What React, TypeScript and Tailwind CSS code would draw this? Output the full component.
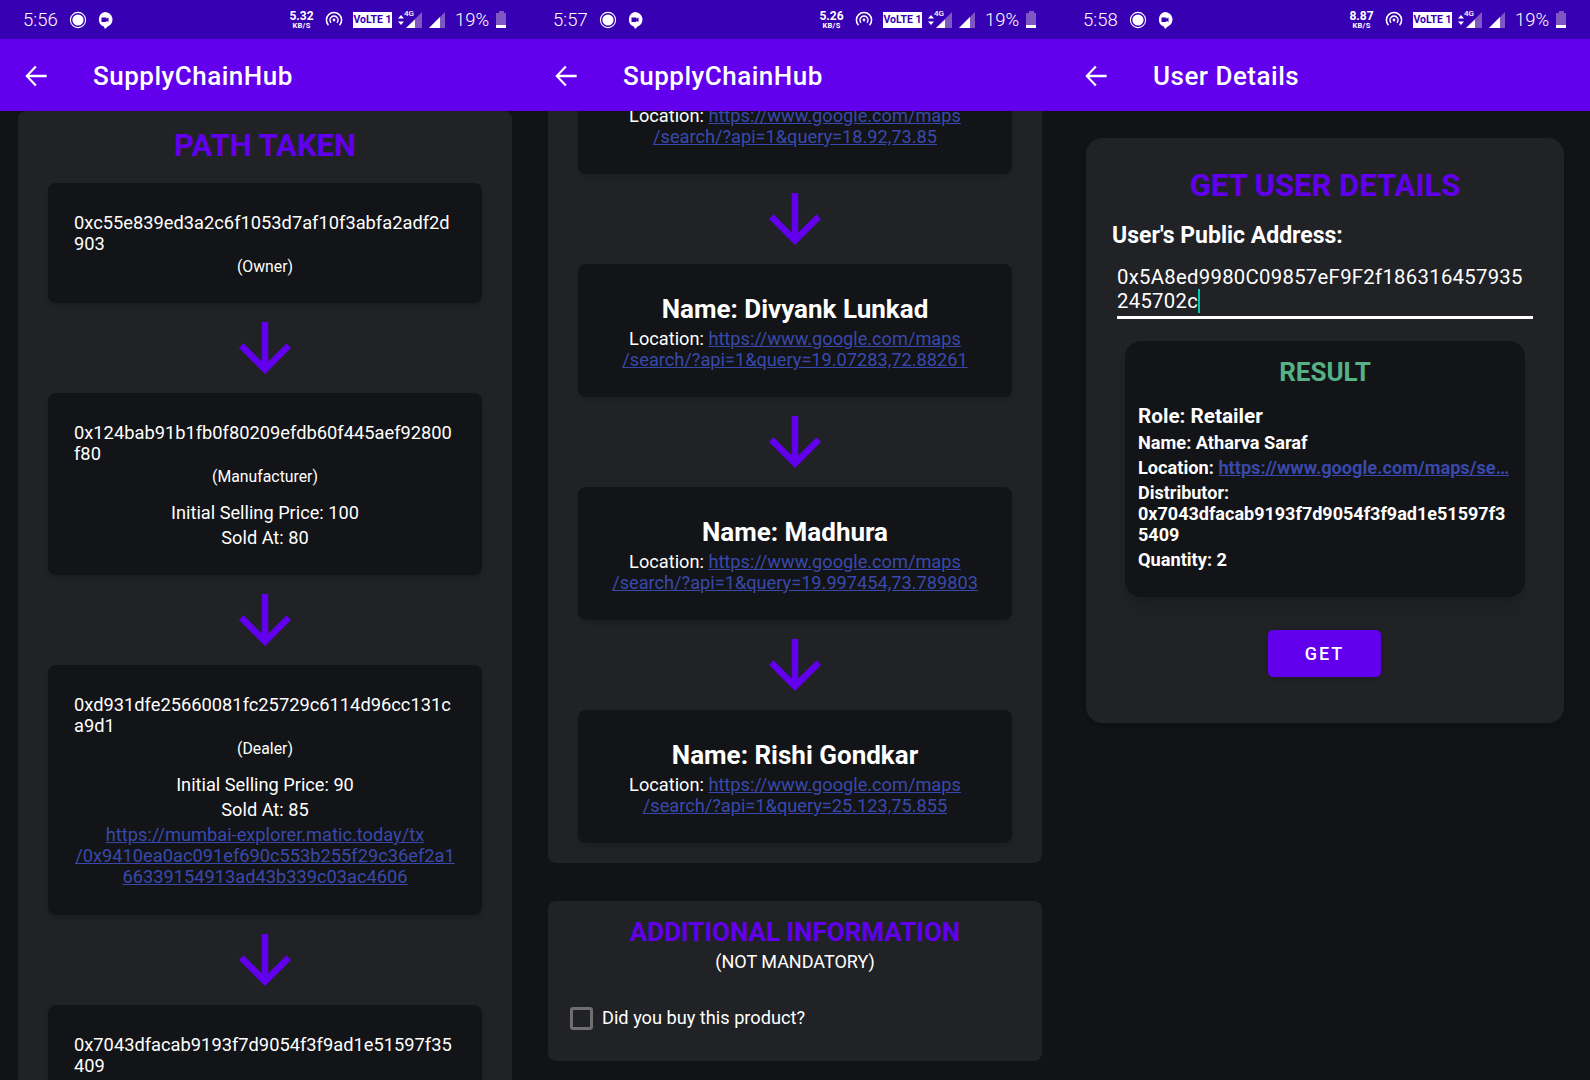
import type { ReactNode } from "react";

function StatusBar({ time, speed }: { time: string; speed: string }) {
  return (
    <div className="h-[39px] shrink-0 bg-[#3700b3] flex items-center text-white relative">
      <span className="ml-[23px] mt-[2px] w-[45px] text-[18.500px] font-light leading-none">{time}</span>
      <svg width="18" height="18" viewBox="0 0 18 18" className="ml-[1px]">
        <circle cx="9" cy="9" r="7.6" fill="none" stroke="white" strokeWidth="1.1" />
        <circle cx="9" cy="9" r="5.6" fill="white" />
      </svg>
      <svg width="16" height="18" viewBox="0 0 16 18" className="ml-[10px]">
        <path d="M8 1a7.500 7.500 0 0 1 2.700 14.500L8 18l-1.200-2.600A7.500 7.500 0 0 1 8 1z" fill="white" />
        <path d="M4.500 6.500h4.800v1.300l2.200-1.300v4.600l-2.200-1.300v1.300H4.500z" fill="#3700b3" />
      </svg>
      <div className="ml-[176px] w-[25px] flex flex-col items-center font-bold">
        <span className="text-[12px] leading-[12px]">{speed}</span>
        <span className="text-[7.5px] leading-[8px] tracking-[0.3px]">KB/S</span>
      </div>
      <svg width="18" height="18" viewBox="0 0 18 18" className="ml-[11px]">
        <path d="M3.400 14.200a7.600 7.600 0 1 1 11.200 0" fill="none" stroke="white" strokeWidth="1.5" />
        <path d="M6 11.700a4 4 0 1 1 6 0" fill="none" stroke="white" strokeWidth="1.5" />
        <circle cx="9" cy="9" r="1.4" fill="white" />
      </svg>
      <div className="ml-[10px] w-[39px] h-[16px] bg-white text-[#3700b3] text-[10.500px] font-bold leading-[16px] text-center whitespace-nowrap">
        VoLTE 1
      </div>
      <svg width="8" height="12" viewBox="0 0 8 12" className="ml-[5px]">
        <path d="M4 1l3 3.600H1zM4 11L1 7.400h6z" fill="white" />
      </svg>
      <div className="relative ml-[0px] w-[18px] h-[18px]">
        <svg width="18" height="18" viewBox="0 0 18 18">
          <path d="M17 1v16H1z" fill="#7e57c2" />
          <path d="M10 8.500V17H1z" fill="white" />
        </svg>
        <span className="absolute left-[-1px] top-[-2px] text-[8px] font-medium leading-[10px]">4G</span>
      </div>
      <svg width="18" height="18" viewBox="0 0 18 18" className="ml-[5px]">
        <path d="M17 1v16H1z" fill="#7e57c2" />
        <path d="M12 6v11H1z" fill="white" />
      </svg>
      <span className="ml-[9px] mt-[2px] text-[18.500px] font-light leading-none">19%</span>
      <div className="ml-[7px] w-[10px] h-[17px] flex flex-col items-center">
        <div className="w-[5px] h-[1.5px] bg-[#7e57c2]" />
        <div className="w-[10px] flex-1 bg-[#7e57c2] flex flex-col justify-end">
          <div className="h-[3px] bg-white" />
        </div>
      </div>
    </div>
  );
}

function AppBar({ title }: { title: string }) {
  return (
    <div className="h-[72px] shrink-0 bg-[#6200ee] flex items-center text-white z-10">
      <svg width="32" height="32" viewBox="0 0 24 24" fill="white" className="ml-[20px] mt-[1px]">
        <path d="M20 11.100H7l5.500-5.600-1.200-1.200L4 12l7.300 7.700 1.200-1.200L7 12.900h13z" />
      </svg>
      <span className="ml-[41px] mt-[2px] text-[26px] font-medium tracking-[0.5px] leading-none">{title}</span>
    </div>
  );
}

function Arrow() {
  return (
    <div className="h-[90px] flex items-center justify-center">
      <svg width="78" height="78" viewBox="0 0 24 24" fill="#6200ee">
        <path d="M20 12l-1.410-1.410L13 16.170V4h-2v12.170l-5.580-5.600L4 12l8 8 8-8z" />
      </svg>
    </div>
  );
}

function Link({ children }: { children: ReactNode }) {
  return <span className="text-[#3949ab] underline">{children}</span>;
}

function Card({ children }: { children: ReactNode }) {
  return <div className="mx-[30px] rounded-[8px] bg-[#131417] shadow-md">{children}</div>;
}

function HashCard({ lines, role, prices, link }: { lines: string[]; role?: string; prices?: string[]; link?: string[] }) {
  return (
    <Card>
      <div className="pt-[29px] pb-[25px] px-[26px] text-white">
        <p className="text-[18.300px] leading-[21px]">
          {lines[0]}
          <br />
          {lines[1]}
        </p>
        {role && <p className="mt-[3px] text-center text-[15.800px] leading-[20px]">({role})</p>}
        {!prices && <div className="h-[1px]" />}
        {prices && (
          <div className="mt-[13px] text-center text-[18.200px] leading-[25px]">
            {prices.map((p) => (
              <p key={p}>{p}</p>
            ))}
          </div>
        )}
        {link && (
          <div className="mt-[2px] text-center text-[18.250px] leading-[21px] pb-[3px]">
            {link.map((l) => (
              <p key={l}>
                <Link>{l}</Link>
              </p>
            ))}
          </div>
        )}
      </div>
    </Card>
  );
}

function LocationLines({ query }: { query: string }) {
  return (
    <p className="text-center text-[18.200px] leading-[21px] text-white">
      Location: <Link>https://www.google.com/maps</Link>
      <br />
      <Link>{query}</Link>
    </p>
  );
}

function NameCard({ name, query }: { name: string; query: string }) {
  return (
    <Card>
      <div className="pt-[30px] pb-[27px]">
        <h3 className="text-center text-[26px] leading-[30px] font-bold text-white mb-[4px]">Name: {name}</h3>
        <LocationLines query={query} />
      </div>
    </Card>
  );
}

function PathScreen() {
  return (
    <div className="w-[530px] h-[1080px] flex flex-col overflow-hidden">
      <StatusBar time="5:56" speed="5.32" />
      <AppBar title="SupplyChainHub" />
      <div className="flex-1 overflow-hidden">
        <div className="mx-[18px] rounded-[8px] bg-[#212226] h-[1000px]">
          <h2 className="pt-[17px] pb-[19px] text-center text-[31px] leading-[36px] font-bold text-[#6200ee]">PATH TAKEN</h2>
          <HashCard lines={["0xc55e839ed3a2c6f1053d7af10f3abfa2adf2d", "903"]} role="Owner" />
          <Arrow />
          <HashCard
            lines={["0x124bab91b1fb0f80209efdb60f445aef92800", "f80"]}
            role="Manufacturer"
            prices={["Initial Selling Price: 100", "Sold At: 80"]}
          />
          <Arrow />
          <HashCard
            lines={["0xd931dfe25660081fc25729c6114d96cc131c", "a9d1"]}
            role="Dealer"
            prices={["Initial Selling Price: 90", "Sold At: 85"]}
            link={[
              "https://mumbai-explorer.matic.today/tx",
              "/0x9410ea0ac091ef690c553b255f29c36ef2a1",
              "66339154913ad43b339c03ac4606",
            ]}
          />
          <Arrow />
          <HashCard lines={["0x7043dfacab9193f7d9054f3f9ad1e51597f35", "409"]} />
        </div>
      </div>
    </div>
  );
}

function JourneyScreen() {
  return (
    <div className="w-[530px] h-[1080px] flex flex-col overflow-hidden">
      <StatusBar time="5:57" speed="5.26" />
      <AppBar title="SupplyChainHub" />
      <div className="flex-1 overflow-hidden">
        <div className="-mt-[38px] mx-[18px] rounded-b-[8px] bg-[#212226] pb-[20px]">
          <Card>
            <div className="pt-[32px] pb-[27px]">
              <LocationLines query="/search/?api=1&query=18.92,73.85" />
            </div>
          </Card>
          <Arrow />
          <NameCard name="Divyank Lunkad" query="/search/?api=1&query=19.07283,72.88261" />
          <Arrow />
          <NameCard name="Madhura" query="/search/?api=1&query=19.997454,73.789803" />
          <Arrow />
          <NameCard name="Rishi Gondkar" query="/search/?api=1&query=25.123,75.855" />
        </div>
        <div className="mt-[38px] mx-[18px] h-[160px] rounded-[8px] bg-[#212226] text-white">
          <h2 className="pt-[15px] text-center text-[26px] leading-[32px] font-bold text-[#6200ee]">ADDITIONAL INFORMATION</h2>
          <p className="mt-[2px] text-center text-[18px] leading-[24px]">(NOT MANDATORY)</p>
          <label className="mt-[32px] ml-[22px] flex items-center gap-[9px]">
            <span className="w-[23px] h-[23px] rounded-[3px] border-[3px] border-[#6f6f6f]" />
            <span className="text-[18.200px] leading-[24px]">Did you buy this product?</span>
          </label>
        </div>
      </div>
    </div>
  );
}

function UserScreen() {
  return (
    <div className="w-[530px] h-[1080px] flex flex-col overflow-hidden">
      <StatusBar time="5:58" speed="8.87" />
      <AppBar title="User Details" />
      <div className="flex-1 overflow-hidden">
        <div className="mt-[27px] ml-[26px] mr-[26px] h-[585px] rounded-[16px] bg-[#212226] px-[26px] text-white shadow-lg">
          <h2 className="pt-[28px] text-center text-[31px] leading-[40px] font-bold text-[#6200ee]">GET USER DETAILS</h2>
          <p className="mt-[15px] text-[23px] leading-[30px] font-bold">User's Public Address:</p>
          <div className="mt-[14px] mx-[5px] border-b-[3px] border-white pb-[3px] text-[20.300px] leading-[24px] tracking-[0.3px] whitespace-nowrap">
            0x5A8ed9980C09857eF9F2f186316457935
            <br />
            245702c<span className="inline-block w-[2px] h-[24px] bg-[#00c9b1] align-top" />
          </div>
          <div className="mt-[22px] mx-[13px] h-[256px] rounded-[16px] bg-[#131417] px-[13px] shadow-xl">
            <h3 className="pt-[16px] text-center text-[26px] leading-[30px] font-bold text-[#55b286]">RESULT</h3>
            <p className="mt-[16px] text-[20.700px] leading-[26px] font-bold">Role: Retailer</p>
            <p className="mt-[2px] text-[18.200px] leading-[24px] font-bold">Name: Atharva Saraf</p>
            <p className="mt-[1px] text-[18.200px] leading-[24px] font-bold whitespace-nowrap">
              Location: <Link>https://www.google.com/maps/se…</Link>
            </p>
            <p className="mt-[2px] text-[18px] leading-[21px] font-bold">
              Distributor:
              <br />
              0x7043dfacab9193f7d9054f3f9ad1e51597f3
              <br />
              5409
            </p>
            <p className="mt-[3px] text-[18.200px] leading-[24px] font-bold">Quantity: 2</p>
          </div>
          <button className="block mt-[33px] ml-[156px] w-[113px] h-[47px] rounded-[5px] bg-[#6200ee] text-[18px] font-medium tracking-[2px] shadow-md">
            GET
          </button>
        </div>
      </div>
    </div>
  );
}

export default function App() {
  return (
    <div className="w-[1590px] h-[1080px] flex overflow-hidden bg-[#121316] font-[Roboto,sans-serif]">
      <PathScreen />
      <JourneyScreen />
      <UserScreen />
    </div>
  );
}
